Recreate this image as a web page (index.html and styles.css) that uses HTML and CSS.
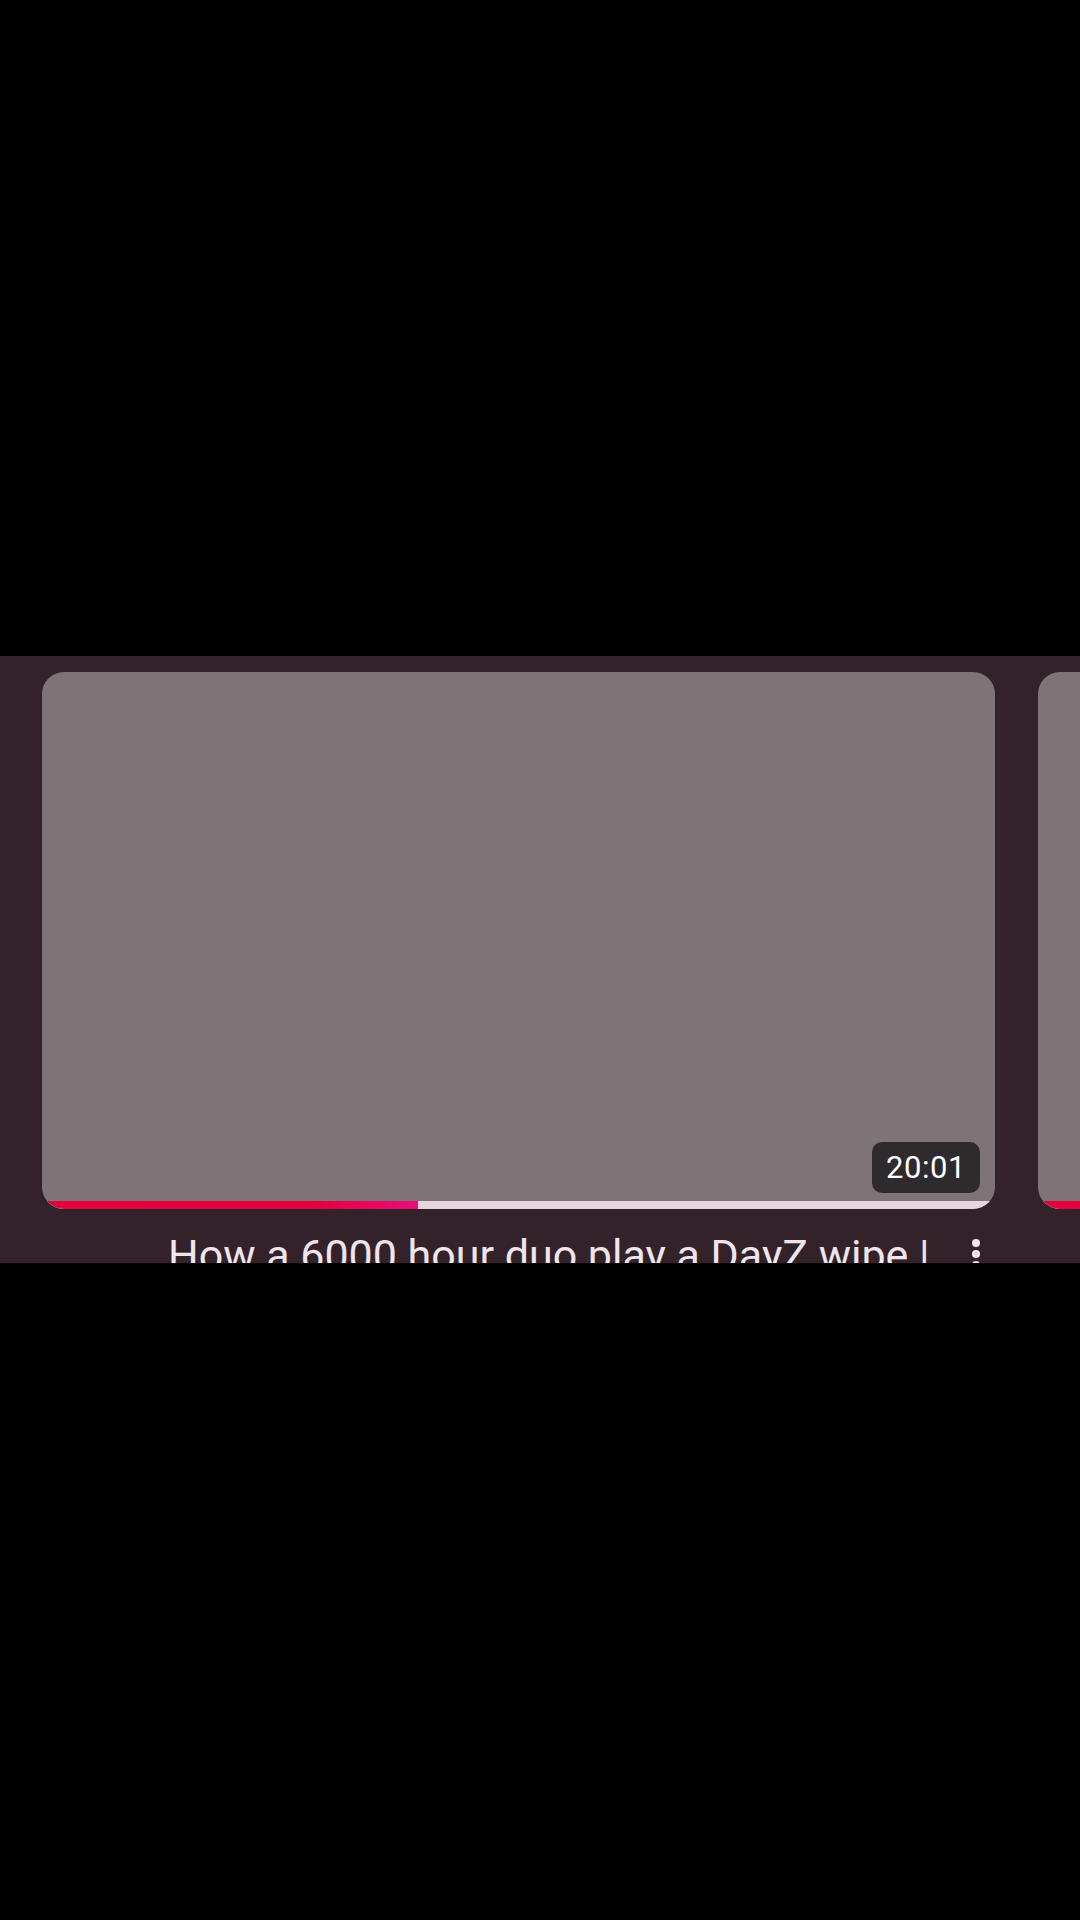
FILE: index.html
```html
<!DOCTYPE html>
<html>
<head>
<meta charset="utf-8">
<link rel="stylesheet" href="styles.css">
</head>
<body>
<div class="top"></div>
<section class="shelf">
  <div class="row">
    <div class="item">
      <div class="thumb">
        <span class="duration">20:01</span>
        <div class="progress"><div class="played" style="width:39.5%"></div></div>
      </div>
      <div class="meta">
        <div class="title">How a 6000 hour duo play a DayZ wipe |</div>
        <div class="kebab"><span></span><span></span><span></span></div>
      </div>
    </div>
    <div class="item">
      <div class="thumb">
        <div class="progress"><div class="played" style="width:60%"></div></div>
      </div>
    </div>
  </div>
</section>
</body>
</html>
```
FILE: styles.css
```css
html, body {
  margin: 0;
  padding: 0;
  background: #000;
  width: 1080px;
  height: 1920px;
  overflow: hidden;
  font-family: Roboto, "Liberation Sans", sans-serif;
}
.top {
  height: 656px;
}
.shelf {
  height: 607px;
  background: #33222a;
  overflow: hidden;
}
.row {
  display: flex;
  gap: 43px;
  padding: 16px 0 0 42px;
}
.item {
  flex: 0 0 953px;
  width: 953px;
}
.thumb {
  position: relative;
  height: 537px;
  background: #7e7477;
  border-radius: 22px;
  overflow: hidden;
}
.duration {
  position: absolute;
  right: 15px;
  bottom: 16px;
  height: 51px;
  width: 108px;
  box-sizing: border-box;
  border-radius: 10px;
  background: #2f2a2d;
  color: #fff;
  font-size: 31px;
  font-weight: 400;
  letter-spacing: 0.6px;
  display: flex;
  align-items: center;
  justify-content: center;
}
.progress {
  position: absolute;
  left: 0;
  right: 0;
  bottom: 0;
  height: 8px;
  background: #e4d5de;
}
.played {
  height: 100%;
  background: linear-gradient(90deg, #e4003b 0%, #e4003d 72%, #e60f7c 100%);
}
.meta {
  display: flex;
  align-items: flex-start;
  padding: 22px 0 0 126px;
}
.title {
  flex: 1;
  color: #efe5ea;
  font-size: 43px;
  line-height: 48px;
  white-space: nowrap;
  overflow: hidden;
}
.kebab {
  display: flex;
  flex-direction: column;
  align-items: center;
  gap: 3px;
  width: 20px;
  margin: 8px 9px 0 24px;
}
.kebab span {
  width: 8px;
  height: 8px;
  border-radius: 50%;
  background: #f1e7ec;
}
```
